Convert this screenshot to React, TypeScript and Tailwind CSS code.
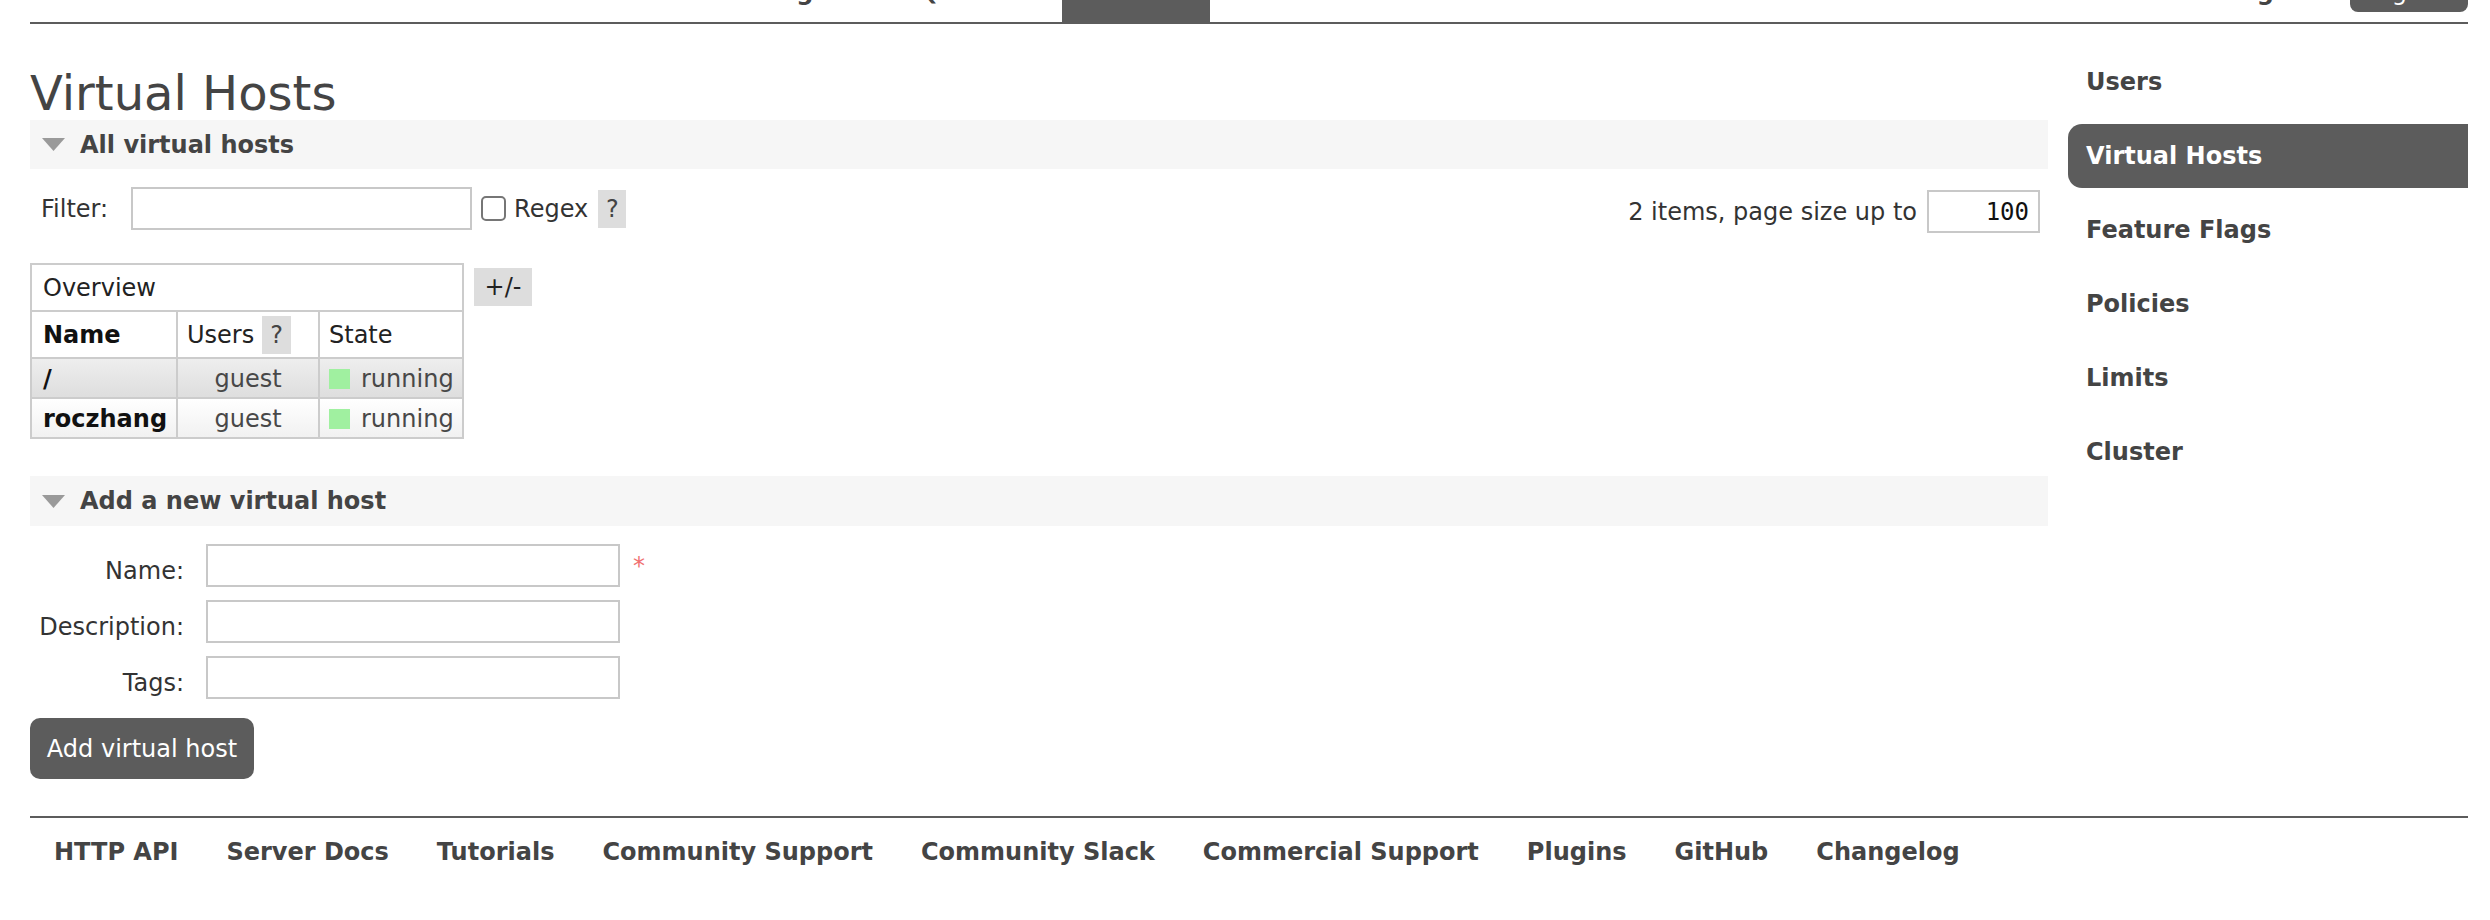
import React from "react";

const navTabs = ["Overview", "Connections", "Channels", "Exchanges", "Queues", "Admin"];
const sideItems = ["Users", "Virtual Hosts", "Feature Flags", "Policies", "Limits", "Cluster"];
const footerLinks = [
  "HTTP API",
  "Server Docs",
  "Tutorials",
  "Community Support",
  "Community Slack",
  "Commercial Support",
  "Plugins",
  "GitHub",
  "Changelog",
];

function Triangle() {
  return (
    <svg width="23" height="13" viewBox="0 0 23 13" className="shrink-0">
      <polygon points="0,0 23,0 11.5,13" fill="#9a9a9a" />
    </svg>
  );
}

function SectionBand({ title, tall }: { title: string; tall?: boolean }) {
  return (
    <div
      className={
        tall
          ? "h-[50px] bg-[#f6f6f6] flex items-center pl-[12px]"
          : "h-[49px] bg-[#f6f6f6] flex items-center pl-[12px]"
      }
    >
      <Triangle />
      <span className="ml-[15px] font-bold text-[#444] leading-[28px]">{title}</span>
    </div>
  );
}

function Help({ w }: { w: string }) {
  return (
    <span
      className={
        w === "a"
          ? "w-[28px] h-[38px] bg-[#dddddd] flex items-center justify-center text-[#444] leading-[28px]"
          : "w-[29px] h-[38px] bg-[#dddddd] flex items-center justify-center text-[#444] leading-[28px]"
      }
    >
      ?
    </span>
  );
}

function FormRow({ label, star }: { label: string; star?: boolean }) {
  return (
    <div className="flex items-start">
      <span className="w-[154px] pt-[13px] text-right text-[#333] leading-[28px]">{label}</span>
      <input
        type="text"
        className="ml-[22px] w-[414px] h-[43px] border-2 border-[#c8c8c8] bg-white outline-none px-[6px]"
      />
      {star ? <span className="ml-[13px] self-center text-[#f07070] leading-[28px]">*</span> : null}
    </div>
  );
}

export default function App() {
  return (
    <div className="font-['DejaVu_Sans',Verdana,sans-serif] text-[24px] text-[#444] pl-[30px] pr-[22px] bg-white min-h-[920px]">
      {/* Header */}
      <div className="h-[24px] border-b-2 border-[#5c5c5c] flex justify-between overflow-hidden">
        <ul className="flex gap-[12px]">
          {navTabs.map((t) => (
            <li
              key={t}
              className={
                t === "Admin"
                  ? "h-[22px] px-[31px] font-bold bg-[#5c5c5c] text-white"
                  : "h-[22px] px-[31px] font-bold text-[#444]"
              }
            >
              <span className="block leading-[28px] -mt-[22px]">{t}</span>
            </li>
          ))}
        </ul>
        <div className="flex items-start">
          <span className="block leading-[28px] -mt-[22px] text-[#444]">
            User <b>guest</b>
          </span>
          <span className="ml-[17px] w-[118px] h-[12px] bg-[#5c5c5c] rounded-b-[8px] text-white overflow-hidden flex justify-center">
            <span className="block leading-[28px] -mt-[22px]">Log out</span>
          </span>
        </div>
      </div>

      {/* Main + sidebar */}
      <div className="flex gap-[20px]">
        <div className="w-[2018px] shrink-0">
          <h1 className="mt-[42px] text-[48px] leading-[54px] font-normal text-[#444]">Virtual Hosts</h1>
          <SectionBand title="All virtual hosts" />

          {/* Filter row */}
          <div className="mt-[18px] flex justify-between items-start">
            <div className="flex items-center h-[43px]">
              <span className="pl-[11px] text-[#333] leading-[28px]">Filter:</span>
              <input
                type="text"
                className="ml-[23px] w-[341px] h-[43px] border-2 border-[#c8c8c8] bg-white outline-none px-[6px]"
              />
              <span className="ml-[9px] w-[25px] h-[25px] border-2 border-[#767676] rounded-[5px] bg-white" />
              <span className="ml-[8px] text-[#333] leading-[28px]">Regex</span>
              <span className="ml-[10px]">
                <Help w="a" />
              </span>
            </div>
            <div className="flex items-center mt-[3px] pr-[8px]">
              <span className="text-[#333] leading-[28px]">2 items, page size up to</span>
              <input
                type="text"
                defaultValue="100"
                className="ml-[10px] w-[113px] h-[43px] border-2 border-[#c8c8c8] bg-white outline-none text-right pr-[9px] font-['DejaVu_Sans_Mono',monospace] text-[24px] text-[#111]"
              />
            </div>
          </div>

          {/* Table */}
          <div className="mt-[30px] flex items-start">
            <div className="w-[434px] border-2 border-[#cccccc]">
              <div className="h-[45px] flex items-center pl-[11px] text-[#222] leading-[28px]">Overview</div>
              <div className="h-[47px] border-t-2 border-[#cccccc] flex">
                <div className="w-[144px] pl-[11px] flex items-center font-bold text-[#111]">Name</div>
                <div className="w-[142px] border-l-2 border-[#cccccc] pl-[9px] flex items-center text-[#222]">
                  <span>Users</span>
                  <span className="ml-[8px]">
                    <Help w="b" />
                  </span>
                </div>
                <div className="w-[144px] border-l-2 border-[#cccccc] pl-[9px] flex items-center text-[#222]">State</div>
              </div>
              {[
                { name: "/", alt: true },
                { name: "roczhang", alt: false },
              ].map((r) => (
                <div
                  key={r.name}
                  className={
                    r.alt
                      ? "h-[40px] pt-[2px] border-t-2 border-[#cccccc] flex bg-gradient-to-b from-[#eeeeee] to-[#dedede]"
                      : "h-[40px] pt-[2px] border-t-2 border-[#cccccc] flex bg-gradient-to-b from-[#ffffff] to-[#f1f1f1]"
                  }
                >
                  <div className="w-[144px] pl-[11px] flex items-center font-bold text-[#111]">{r.name}</div>
                  <div className="w-[142px] border-l-2 border-[#cccccc] -mt-[2px] pt-[2px] flex items-center justify-center text-[#484848]">
                    guest
                  </div>
                  <div className="w-[144px] border-l-2 border-[#cccccc] -mt-[2px] pt-[2px] flex items-center text-[#484848]">
                    <span className="ml-[9px] w-[21px] h-[20px] bg-[#a0f0a0]" />
                    <span className="ml-[11px]">running</span>
                  </div>
                </div>
              ))}
            </div>
            <div className="ml-[10px] mt-[5px] w-[58px] h-[38px] bg-[#dddddd] flex items-center justify-center text-[#222] leading-[28px]">
              +/-
            </div>
          </div>

          {/* Add a new virtual host */}
          <div className="mt-[37px]">
            <SectionBand title="Add a new virtual host" tall />
          </div>
          <div className="mt-[18px] flex flex-col gap-[13px]">
            <FormRow label="Name:" star />
            <FormRow label="Description:" />
            <FormRow label="Tags:" />
          </div>
          <button className="mt-[19px] w-[224px] h-[61px] bg-[#5c5c5c] rounded-[10px] text-white leading-[28px]">
            Add virtual host
          </button>
        </div>

        {/* Sidebar */}
        <div className="w-[400px] shrink-0 pt-[26px]">
          <ul className="flex flex-col gap-[10px]">
            {sideItems.map((s) => (
              <li
                key={s}
                className={
                  s === "Virtual Hosts"
                    ? "h-[64px] flex items-center pl-[18px] font-bold bg-[#5c5c5c] text-white rounded-l-[14px]"
                    : "h-[64px] flex items-center pl-[18px] font-bold text-[#444]"
                }
              >
                <span className="leading-[28px]">{s}</span>
              </li>
            ))}
          </ul>
        </div>
      </div>

      {/* Footer */}
      <div className="mt-[37px] border-t-2 border-[#5c5c5c] pt-[20px]">
        <ul className="flex gap-[48px] pl-[24px]">
          {footerLinks.map((f) => (
            <li key={f} className="font-bold text-[#444] leading-[28px]">
              {f}
            </li>
          ))}
        </ul>
      </div>
    </div>
  );
}
